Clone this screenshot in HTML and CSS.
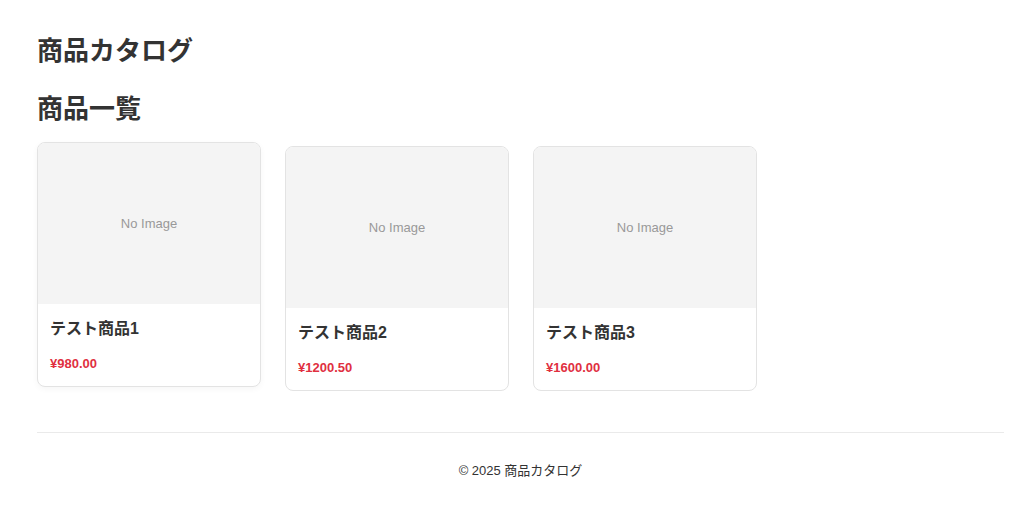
FILE: index.html
```html
<!DOCTYPE html>
<html lang="ja">

<head>
    <meta charset="UTF-8">
    <meta name="viewport" content="width=device-width, initial-scale=1">
    <title>商品カタログ</title>
    <link rel="stylesheet" href="styles.css">
</head>

<body>
    <div class="page">
        <h1 class="site-title">商品カタログ</h1>

        <h2 class="section-title">商品一覧</h2>

        <div class="product-list">
            <div class="product-card hover">
                <div class="product-image">No Image</div>
                <div class="product-info">
                    <h3 class="product-name">テスト商品1</h3>
                    <p class="product-price">¥980.00</p>
                </div>
            </div>
            <div class="product-card">
                <div class="product-image">No Image</div>
                <div class="product-info">
                    <h3 class="product-name">テスト商品2</h3>
                    <p class="product-price">¥1200.50</p>
                </div>
            </div>
            <div class="product-card">
                <div class="product-image">No Image</div>
                <div class="product-info">
                    <h3 class="product-name">テスト商品3</h3>
                    <p class="product-price">¥1600.00</p>
                </div>
            </div>
        </div>

        <footer class="footer">
            <p>© 2025 商品カタログ</p>
        </footer>
    </div>
</body>
</html>
```

FILE: styles.css
```css
body {
    margin: 0;
    font-family: "Liberation Sans", "Noto Sans CJK JP", sans-serif;
    color: #333;
    background-color: #fff;
}

.page {
    padding: 36px 20px 20px 37px;
}

.site-title {
    font-size: 26px;
    line-height: 31px;
    margin: 0 0 27px 0;
}

.section-title {
    font-size: 26px;
    line-height: 31px;
    margin: 0 0 21px 0;
}

.product-list {
    display: flex;
    gap: 24px;
}

.product-card {
    width: 224px;
    box-sizing: border-box;
    border: 1px solid #e3e3e3;
    border-radius: 8px;
    overflow: hidden;
    background-color: #fff;
}

.product-card.hover {
    transform: translateY(-4px);
    box-shadow: 0 2px 6px rgba(0, 0, 0, 0.04);
}

.product-image {
    height: 161px;
    background-color: #f4f4f4;
    color: #999;
    font-size: 13px;
    display: flex;
    align-items: center;
    justify-content: center;
}

.product-info {
    padding: 14px 12px 13px 12px;
}

.product-name {
    font-size: 16px;
    line-height: 22px;
    margin: 0 0 15px 0;
}

.product-price {
    font-size: 13px;
    line-height: 18px;
    font-weight: bold;
    color: #e0303f;
    margin: 0;
}

.footer {
    margin-top: 41px;
    border-top: 1px solid #eaeaea;
    text-align: center;
    font-size: 13px;
    color: #333;
}

.footer p {
    margin: 29px 0 0 0;
    line-height: 18px;
}
```
